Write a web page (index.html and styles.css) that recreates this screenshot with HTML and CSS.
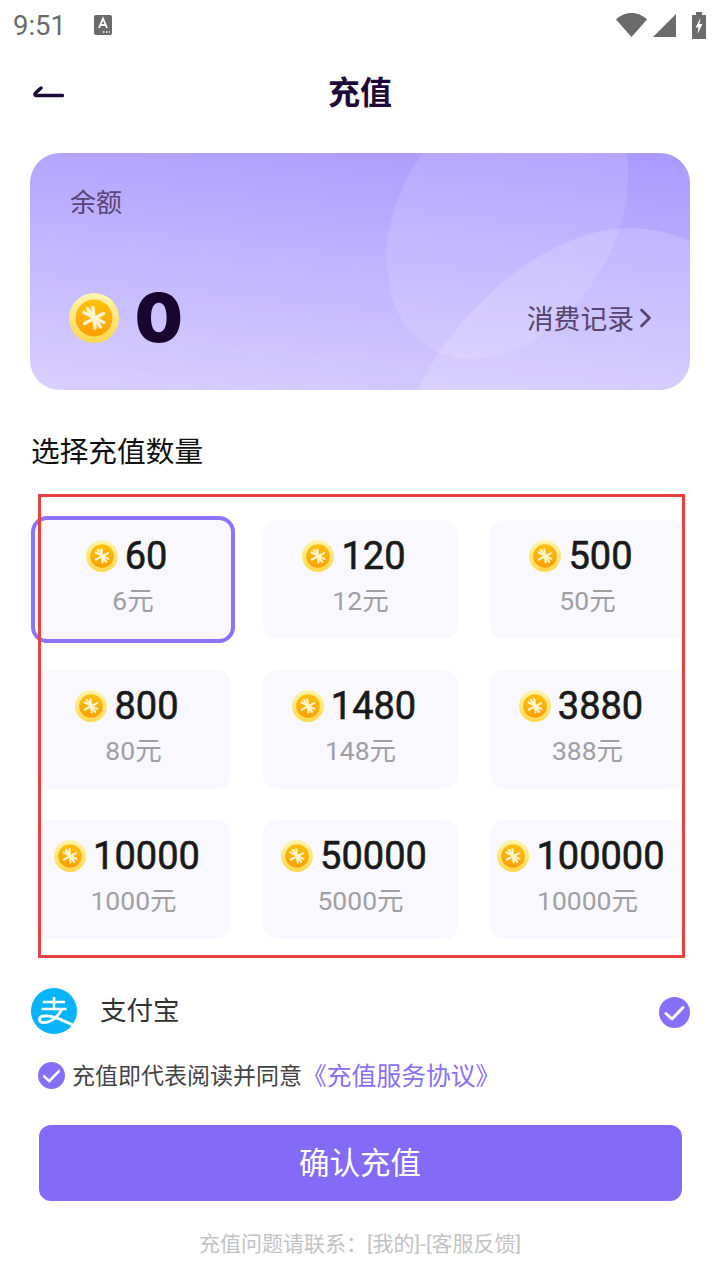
FILE: index.html
```html
<!DOCTYPE html>
<html lang="zh-CN">
<head>
    <meta charset="UTF-8">
    <meta name="viewport" content="width=device-width, initial-scale=1.0">
    <title>充值</title>
    <link rel="stylesheet" href="styles.css">
</head>
<body>

<svg class="defs" width="0" height="0">
    <defs>
        <linearGradient id="coinRim" x1="0" y1="0" x2="0" y2="1">
            <stop offset="0" stop-color="#fff5b0"/>
            <stop offset="1" stop-color="#ffd84a"/>
        </linearGradient>
        <linearGradient id="coinFace" x1="0" y1="0" x2="0" y2="1">
            <stop offset="0" stop-color="#ffc10d"/>
            <stop offset="1" stop-color="#ff9f00"/>
        </linearGradient>
        <symbol id="coin" viewBox="0 0 50 50">
            <circle cx="25" cy="25" r="25" fill="url(#coinRim)"/>
            <circle cx="25" cy="25" r="18.5" fill="url(#coinFace)"/>
            <g stroke="#fff6cf" stroke-width="3.400" stroke-linecap="round">
                <path d="M24 14.500L26 35"/>
                <path d="M15 19.500L35 29.500"/>
                <path d="M15.500 30.500L34.500 20.500"/>
                <path d="M18.500 15.500L31.500 34"/>
            </g>
        </symbol>
        <symbol id="check" viewBox="0 0 31 31">
            <circle cx="15.500" cy="15.500" r="15.500" fill="#8670f9"/>
            <path d="M7 16.500L13 22L24 10.500" fill="none" stroke="#fff" stroke-width="3" stroke-linecap="round" stroke-linejoin="round"/>
        </symbol>
    </defs>
</svg>

<div class="status-bar">
    <span class="clock">9:51</span>
    <svg class="notif" width="18" height="20" viewBox="0 0 18 20">
        <rect width="18" height="20" rx="2" fill="#6b6b6b"/>
        <path d="M5 13L9 3.500L13 13M6.500 10H11.500" fill="none" stroke="#fff" stroke-width="1.800"/>
        <path d="M9 17h1.500M12 17h1.500M15 17h1" stroke="#fff" stroke-width="1.500"/>
    </svg>
    <span class="spacer"></span>
    <svg class="wifi" width="31" height="24" viewBox="0 0 31 24">
        <path d="M0 6.500C4 2.500 9.500 0 15.500 0S27 2.500 31 6.500L15.500 24Z" fill="#6b6b6b"/>
    </svg>
    <svg class="signal" width="23" height="23" viewBox="0 0 23 23">
        <path d="M23 0V23H0Z" fill="#6b6b6b"/>
    </svg>
    <svg class="battery" width="14" height="27" viewBox="0 0 14 27">
        <path d="M4 0H10V3H14V27H0V3H4Z" fill="#6b6b6b"/>
        <path d="M8.500 6L3.500 15.500H6.500L5.500 22L10.500 12H7.500Z" fill="#fff"/>
    </svg>
</div>

<header class="top-bar">
    <svg class="back" width="32" height="16" viewBox="0 0 32 16">
        <path d="M30.500 12.500H5C2.500 12.500 2.500 11 4 9.500L9 5" fill="none" stroke="#1e0a38" stroke-width="3.400" stroke-linecap="round" stroke-linejoin="round"/>
    </svg>
    <h1>充值</h1>
</header>

<section class="balance">
    <svg class="balance-bg" viewBox="0 0 659 236" preserveAspectRatio="none">
        <path d="M392 0C368 35 356 70 356 104C356 170 395 205 442 205C520 205 597 110 597 24C597 15 597 8 596 0Z" fill="#fff" fill-opacity="0.12"/>
        <path d="M387 236C420 165 510 75 599 75C625 75 642 80 659 88V236Z" fill="#fff" fill-opacity="0.16"/>
    </svg>
    <div class="balance-label">余额</div>
    <div class="balance-row">
        <svg class="coin-lg"><use href="#coin"/></svg>
        <span class="balance-num">0</span>
        <span class="spacer"></span>
        <span class="records">消费记录</span>
        <svg class="chev" width="13" height="20" viewBox="0 0 13 20">
            <path d="M2.500 2L10.500 10L2.500 18" fill="none" stroke="#574470" stroke-width="2.600" stroke-linecap="round" stroke-linejoin="round"/>
        </svg>
    </div>
</section>

<h2 class="pick-title">选择充值数量</h2>

<div class="amounts">
    <div class="amount selected">
        <div class="amount-top"><svg class="coin"><use href="#coin"/></svg><span>60</span></div>
        <div class="price">6元</div>
    </div>
    <div class="amount">
        <div class="amount-top"><svg class="coin"><use href="#coin"/></svg><span>120</span></div>
        <div class="price">12元</div>
    </div>
    <div class="amount">
        <div class="amount-top"><svg class="coin"><use href="#coin"/></svg><span>500</span></div>
        <div class="price">50元</div>
    </div>
    <div class="amount">
        <div class="amount-top"><svg class="coin"><use href="#coin"/></svg><span>800</span></div>
        <div class="price">80元</div>
    </div>
    <div class="amount">
        <div class="amount-top"><svg class="coin"><use href="#coin"/></svg><span>1480</span></div>
        <div class="price">148元</div>
    </div>
    <div class="amount">
        <div class="amount-top"><svg class="coin"><use href="#coin"/></svg><span>3880</span></div>
        <div class="price">388元</div>
    </div>
    <div class="amount">
        <div class="amount-top"><svg class="coin"><use href="#coin"/></svg><span>10000</span></div>
        <div class="price">1000元</div>
    </div>
    <div class="amount">
        <div class="amount-top"><svg class="coin"><use href="#coin"/></svg><span>50000</span></div>
        <div class="price">5000元</div>
    </div>
    <div class="amount">
        <div class="amount-top"><svg class="coin"><use href="#coin"/></svg><span>100000</span></div>
        <div class="price">10000元</div>
    </div>
    <div class="red-box"></div>
</div>

<div class="pay-row">
    <svg class="alipay" width="46" height="46" viewBox="0 0 46 46">
        <circle cx="23" cy="23" r="23" fill="#07b4fb"/>
        <path d="M12 14H34M23 9V21M10.500 21H35.500" fill="none" stroke="#fff" stroke-width="2.500"/>
        <path d="M31 21C28 28 20 34.500 13 34.500C7 34.500 7 28.500 13 28C22 27 33 33 48 40" fill="none" stroke="#fff" stroke-width="2.800"/>
    </svg>
    <span class="pay-name">支付宝</span>
    <span class="spacer"></span>
    <svg class="check-lg"><use href="#check"/></svg>
</div>

<div class="agree">
    <svg class="check-sm"><use href="#check"/></svg>
    <span class="agree-text">充值即代表阅读并同意</span><span class="agree-link">《充值服务协议》</span>
</div>

<button class="confirm" type="button">确认充值</button>

<p class="contact">充值问题请联系：[我的]-[客服反馈]</p>

</body>
</html>
```

FILE: styles.css
```css
* {
    box-sizing: border-box;
}
html, body {
    margin: 0;
    padding: 0;
}
body {
    width: 720px;
    height: 1280px;
    overflow: hidden;
    background-color: #fff;
    font-family: Roboto, "Noto Sans CJK SC", sans-serif;
}
.defs {
    position: absolute;
}
.spacer {
    flex: 1;
}

.status-bar {
    display: flex;
    align-items: center;
    height: 50px;
    padding: 0 14px 0 13px;
}
.clock {
    font-size: 27.500px;
    color: #6b6b6b;
    width: 81px;
}
.wifi {
    margin-right: 6px;
}
.signal {
    margin-right: 16px;
}

.top-bar {
    position: relative;
    display: flex;
    align-items: center;
    justify-content: center;
    height: 86px;
    padding-bottom: 6px;
}
.top-bar h1 {
    margin: 0;
    font-size: 32px;
    font-weight: 700;
    color: #1e0a38;
}
.back {
    position: absolute;
    left: 32px;
    top: 33px;
}

.balance {
    position: relative;
    overflow: hidden;
    width: 660px;
    height: 237px;
    margin: 17px 0 0 30px;
    padding: 31px 38px 0 40px;
    border-radius: 30px;
    background: linear-gradient(186deg, #a999ff 0%, #d9d0ff 100%);
}
.balance-bg {
    position: absolute;
    left: 0;
    top: 0;
    width: 100%;
    height: 100%;
}
.balance-label {
    position: relative;
    font-size: 26px;
    line-height: 38px;
    color: #5a4478;
}
.balance-row {
    position: relative;
    display: flex;
    align-items: center;
    margin-top: 68px;
    height: 56px;
}
.coin-lg {
    width: 50px;
    height: 50px;
    margin-left: -1px;
    margin-right: 16px;
}
.balance-num {
    font-family: Inter, Roboto, sans-serif;
    font-size: 67px;
    font-weight: 900;
    line-height: 56px;
    color: #1a0530;
}
.records {
    margin-bottom: 2px;
    font-size: 26.800px;
    color: #574470;
}
.chev {
    margin-left: 5px;
    margin-right: 0;
}

.pick-title {
    margin: 42px 0 0 31px;
    font-size: 28.700px;
    line-height: 40px;
    font-weight: 400;
    color: #111;
}

.amounts {
    position: relative;
    display: grid;
    grid-template-columns: repeat(3, 195px);
    column-gap: 32px;
    row-gap: 31px;
    margin-top: 48px;
    padding-left: 36px;
}
.amount {
    height: 119px;
    padding-top: 13px;
    border-radius: 14px;
    background-color: #f9f8fe;
    text-align: center;
}
.amount.selected {
    margin-left: -1px;
    width: 196px;
    border-radius: 12px;
    box-shadow: 0 0 0 4px #8a74fb;
}
.amount-top {
    display: flex;
    align-items: center;
    justify-content: center;
    height: 46px;
    padding-right: 13px;
    font-size: 38px;
    font-weight: 400;
    color: #1a1a1a;
    -webkit-text-stroke: 0.6px #1a1a1a;
}
.coin {
    width: 32px;
    height: 32px;
    margin-right: 7px;
}
.price {
    margin-top: 3px;
    font-size: 26.500px;
    line-height: 38px;
    color: #a0a0a3;
}
.red-box {
    position: absolute;
    left: 38px;
    top: -26px;
    width: 647px;
    height: 464px;
    border: 3px solid #e8413f;
}

.pay-row {
    display: flex;
    align-items: center;
    height: 46px;
    margin-top: 49px;
    padding: 0 30px 0 31px;
}
.pay-name {
    margin-left: 23px;
    margin-bottom: 5px;
    font-size: 26.500px;
    color: #333;
}
.check-lg {
    width: 31px;
    height: 31px;
    margin-top: 2px;
}

.agree {
    display: flex;
    align-items: center;
    height: 34px;
    margin-top: 24px;
    padding-left: 38px;
    font-size: 23px;
}
.check-sm {
    width: 27px;
    height: 27px;
    margin-right: 7px;
}
.agree-text {
    margin-bottom: 2px;
    color: #444;
}
.agree-link {
    margin-bottom: 2px;
    font-size: 24.800px;
    color: #8670f9;
}

.confirm {
    display: block;
    width: 643px;
    height: 76px;
    margin: 33px 0 0 38.500px;
    padding: 0 0 4px;
    border: none;
    border-radius: 12px;
    background-color: #836bf7;
    color: #fff;
    font-family: inherit;
    font-size: 30.500px;
    cursor: pointer;
}

.contact {
    margin: 28px 0 0;
    font-size: 21px;
    line-height: 30px;
    text-align: center;
    color: #c3c3c6;
}
```
